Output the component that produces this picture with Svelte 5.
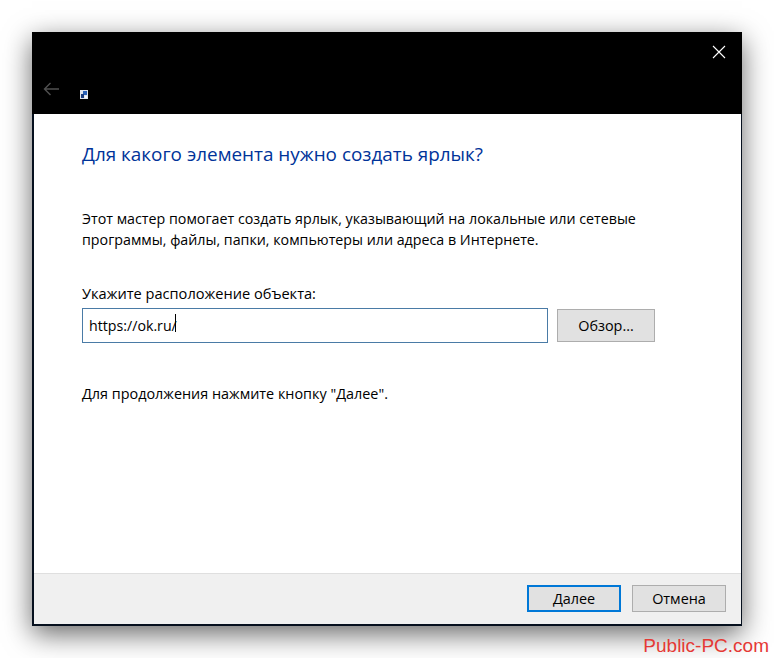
<script>
  let location = $state('https://ok.ru/');
</script>

<div class="page">
  <div class="wizard">
    <div class="titlebar">
      <div class="close-row">
        <svg width="14" height="14" viewBox="0 0 14 14"><path d="M1 1 L13 13 M13 1 L1 13" stroke="#fff" stroke-width="1.1" fill="none"/></svg>
      </div>
      <div class="nav-row">
        <svg class="back" width="16" height="14" viewBox="0 0 16 14"><path d="M16 7 H1.5 M7.5 1 L1.5 7 L7.5 13" stroke="#505050" stroke-width="1.4" fill="none"/></svg>
        <svg class="app-icon" width="8" height="9" viewBox="0 0 8 9">
          <rect width="8" height="9" fill="#dfe5ee"/>
          <rect x="3" y="1" width="4" height="4" fill="#2a62b8"/>
          <rect x="1" y="4" width="3" height="4" fill="#1d3f80"/>
          <rect x="5" y="6" width="2" height="2" fill="#f6f8fb"/>
        </svg>
      </div>
    </div>

    <div class="content">
      <h1>Для какого элемента нужно создать ярлык?</h1>
      <p class="intro">Этот мастер помогает создать ярлык, указывающий на локальные или сетевые<br />программы, файлы, папки, компьютеры или адреса в Интернете.</p>

      <label for="loc">Укажите расположение объекта:</label>
      <div class="loc-row">
        <div class="input-wrap">
          <input id="loc" type="text" bind:value={location} spellcheck="false" />
          <span class="caret"></span>
        </div>
        <button class="btn browse">Обзор...</button>
      </div>

      <p class="hint">Для продолжения нажмите кнопку "Далее".</p>
    </div>

    <div class="footer">
      <button class="btn primary">Далее</button>
      <button class="btn">Отмена</button>
    </div>
  </div>

  <div class="watermark">Public-PC.com</div>
</div>

<style>
  :global(body) {
    background: #fff;
  }

  .page {
    width: 774px;
    height: 658px;
    box-sizing: border-box;
    padding: 32px 0 0 32px;
    overflow: hidden;
    font-family: 'Open Sans', 'Noto Sans', sans-serif;
    color: #000;
  }

  .wizard {
    width: 710px;
    height: 594px;
    box-sizing: border-box;
    display: flex;
    flex-direction: column;
    background: #fff;
    border: 2px solid #06101e;
    border-top: none;
    border-right-width: 1px;
    box-shadow: 0 8px 26px rgba(0, 0, 0, 0.6);
  }

  .titlebar {
    height: 82px;
    background: #000;
    margin: 0 -1px 0 -2px;
    flex-shrink: 0;
  }

  .close-row {
    display: flex;
    justify-content: flex-end;
    padding: 13px 16px 0 0;
    height: 27px;
  }

  .nav-row {
    display: flex;
    align-items: flex-start;
    padding: 10px 0 0 11px;
  }

  .back {
    margin-right: 21px;
  }

  .app-icon {
    margin-top: 8px;
  }

  .content {
    flex: 1;
    padding: 0 0 0 48px;
  }

  h1 {
    margin: 28px 0 0 0;
    font-size: 18.9px;
    line-height: 25px;
    font-weight: 400;
    color: #003399;
  }

  .intro {
    margin: 41px 0 0 0;
    font-size: 14.25px;
    line-height: 21px;
  }

  label {
    display: block;
    margin-top: 33px;
    font-size: 14.6px;
    line-height: 20px;
  }

  .loc-row {
    display: flex;
    align-items: flex-start;
    gap: 9px;
    margin-top: 5px;
  }

  .input-wrap {
    position: relative;
    width: 466px;
    height: 35px;
  }

  input {
    width: 100%;
    height: 100%;
    box-sizing: border-box;
    padding: 0 6px;
    border: 1px solid #4a7ba6;
    outline: none;
    border-radius: 0;
    font: inherit;
    font-size: 14.2px;
    color: #000;
    background: #fff;
  }

  .caret {
    position: absolute;
    left: 93px;
    top: 6px;
    width: 1px;
    height: 18px;
    background: #000;
  }

  .btn {
    width: 98px;
    height: 27px;
    box-sizing: border-box;
    padding: 0;
    background: #e1e1e1;
    border: 1px solid #adadad;
    border-radius: 0;
    font: inherit;
    font-size: 14.4px;
    color: #000;
  }

  .browse {
    height: 33px;
    margin-top: 1px;
  }

  .hint {
    margin: 41px 0 0 0;
    font-size: 14.4px;
    line-height: 20px;
  }

  .footer {
    height: 51px;
    box-sizing: border-box;
    flex-shrink: 0;
    display: flex;
    justify-content: flex-end;
    align-items: flex-start;
    gap: 11px;
    padding: 11px 15px 0 0;
    background: #f0f0f0;
    border-top: 1px solid #dfdfdf;
  }

  .footer .btn {
    width: 94px;
  }

  .primary {
    border: 2px solid #0078d7;
  }

  .watermark {
    margin-top: 8px;
    padding-right: 5px;
    text-align: right;
    font-family: 'Liberation Sans', sans-serif;
    font-size: 19px;
    line-height: 24px;
    color: #e53935;
  }
</style>
